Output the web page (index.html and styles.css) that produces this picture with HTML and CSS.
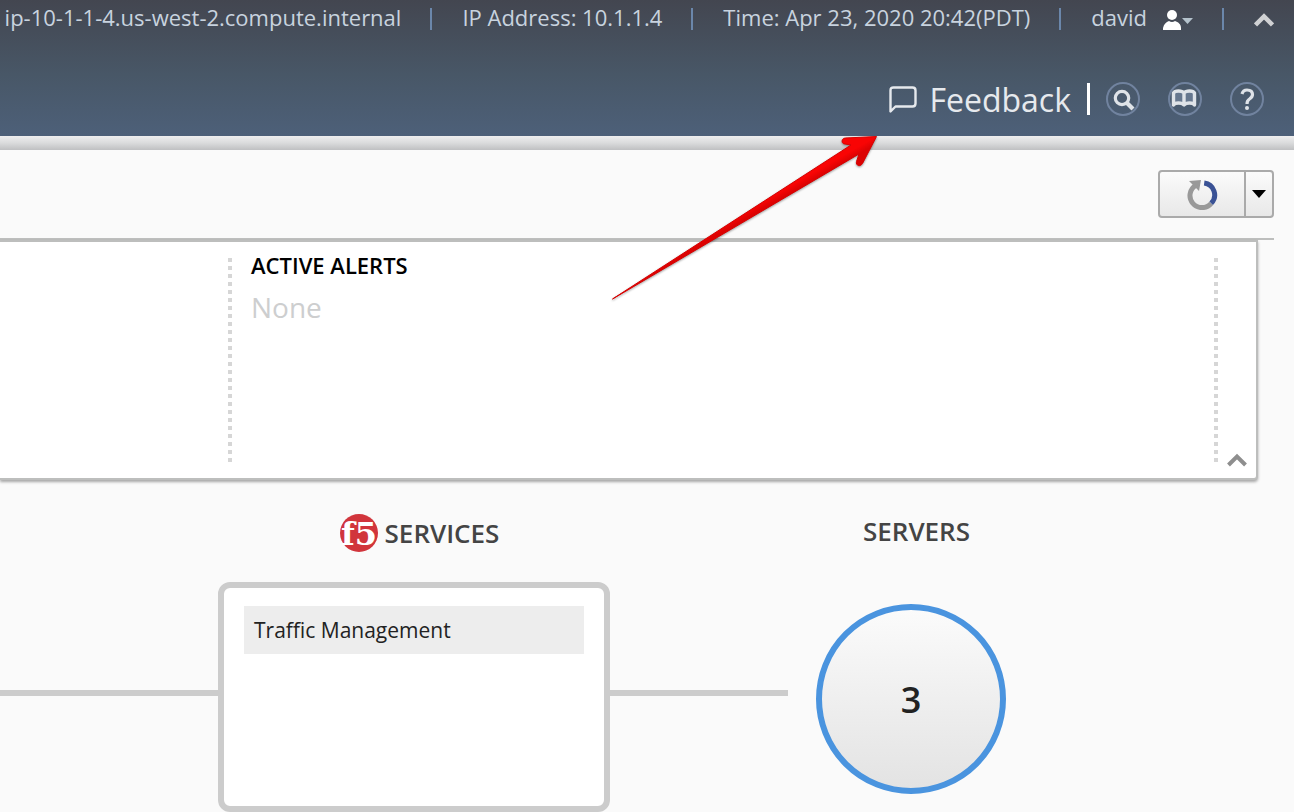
FILE: index.html
```html
<!DOCTYPE html>
<html lang="en">
<head>
<meta charset="utf-8">
<title>Dashboard</title>
<link rel="stylesheet" href="styles.css">
</head>
<body>
<header class="header">
  <ul class="status">
    <li class="status-item">ip-10-1-1-4.us-west-2.compute.internal</li>
    <li class="status-item">IP Address: 10.1.1.4</li>
    <li class="status-item">Time: Apr 23, 2020 20:42(PDT)</li>
    <li class="status-item">
      <button class="plain user" type="button">david
        <svg class="user-icon" width="30" height="22" viewBox="0 0 30 22" aria-hidden="true"><circle cx="9" cy="7" r="5" fill="#fff"/><path d="M0 22v-2c1-4 3-6 6-7q3 2 6 0c3 1 6 3 6 7v2z" fill="#fff"/><path d="M19 10h11l-5.500 6z" fill="#b4c2cc"/></svg>
      </button>
    </li>
    <li class="status-item">
      <button class="plain" type="button" aria-label="Collapse header"><svg width="20" height="22" viewBox="0 0 20 22"><path d="M1.500 17 10 8.500 18.500 17" fill="none" stroke="#d0d1d3" stroke-width="4.500"/></svg></button>
    </li>
  </ul>
  <nav class="tools" aria-label="Tools">
    <a class="feedback" href="#"><svg width="28" height="28" viewBox="0 0 28 28" aria-hidden="true"><path d="M1.500 26.500v-21q0-3 3-3h19q3 0 3 3v13q0 3-3 3h-17z" fill="none" stroke="#e6e9ed" stroke-width="2.400" stroke-linejoin="round"/></svg><span class="feedback-label">Feedback</span></a>
    <span class="divider"></span>
    <a href="#" aria-label="Search"><svg width="34" height="34" viewBox="0 0 34 34"><circle cx="17" cy="17" r="16" fill="none" stroke="#71839f" stroke-width="2"/><circle cx="16" cy="16" r="6.700" fill="none" stroke="#dfe3e8" stroke-width="3.200"/><path d="m21 21 6 6" stroke="#dfe3e8" stroke-width="4.200"/></svg></a>
    <a href="#" aria-label="Documentation"><svg width="34" height="34" viewBox="0 0 34 34"><circle cx="17" cy="17" r="16" fill="none" stroke="#71839f" stroke-width="2"/><path d="M5.500 23V11q1-2 5-2 4 0 5.500 2 1.500-2 5.500-2 4 0 5 2v12q-1-2-5-2-4 0-5.500 2-1.500-2-5.500-2-4 0-5 2zM16 10v13" fill="#66778e" stroke="#dfe3e8" stroke-width="3.400" stroke-linejoin="round"/></svg></a>
    <a href="#" aria-label="Help"><svg width="34" height="34" viewBox="0 0 34 34"><circle cx="17" cy="17" r="16" fill="none" stroke="#71839f" stroke-width="2"/><path d="M12 12q1-4 5-4 5.500 0 5.500 4.500 0 2.500-3 4.500-2.500 1.500-2.500 5" fill="none" stroke="#dfe3e8" stroke-width="3.200"/><circle cx="17" cy="26" r="2" fill="#dfe3e8"/></svg></a>
  </nav>
  <svg class="arrow" width="270" height="168" viewBox="0 0 270 168" aria-hidden="true">
    <defs><linearGradient id="red" gradientUnits="userSpaceOnUse" x1="130" y1="76" x2="138" y2="90"><stop offset="0.300" stop-color="#f90404"/><stop offset="0.700" stop-color="#dc0202"/></linearGradient></defs>
    <path d="M4.500 165 243 11l-6-1c-4 0-4-6 .5-6L268.500 2.500l-14 27c-2.500 4-7 2-6-2l2.500-7.500z" fill="url(#red)" stroke="#d80000" stroke-width="1" stroke-linejoin="round"/>
  </svg>
</header>
<div class="strip"></div>
<main class="main">
  <div class="toolbar">
    <div class="split">
      <button class="split-main" type="button" aria-label="Refresh"><svg width="32" height="32" viewBox="0 0 32 32"><path d="M10.200 7.100A12 12 0 1 0 25.200 25.300" fill="none" stroke="#999" stroke-width="5"/><path d="M18.200 5A12 12 0 0 1 25.200 25.300" fill="none" stroke="#3a5295" stroke-width="5"/><path d="M3 3l12-1-2 11z" fill="#999"/></svg></button>
      <button class="split-more" type="button" aria-label="Refresh options"><svg width="14" height="8" viewBox="0 0 14 8"><path d="M0 0h14L7 8z"/></svg></button>
    </div>
  </div>
  <section class="panel">
    <div class="panel-side"></div>
    <div class="alerts">
      <h2 class="alerts-title">ACTIVE ALERTS</h2>
      <p class="alerts-none">None</p>
    </div>
    <div class="panel-end">
      <button class="plain" type="button" aria-label="Collapse panel"><svg width="20" height="14" viewBox="0 0 20 14"><path d="M1.500 12 10 3.500 18.500 12" fill="none" stroke="#8e8e8e" stroke-width="4"/></svg></button>
    </div>
  </section>
  <section class="map">
    <div class="line line-start"></div>
    <div class="group group-services">
      <h2 class="group-title"><svg class="logo" width="38" height="38" viewBox="0 0 38 38" role="img" aria-label="f5"><circle cx="19" cy="19" r="19" fill="#d1353c"/><text class="logo-text" x="19" y="31" text-anchor="middle">f5</text></svg>SERVICES</h2>
      <div class="card"><a class="service" href="#">Traffic Management</a></div>
    </div>
    <div class="line line-end"></div>
    <div class="group group-servers">
      <h2 class="group-title">SERVERS</h2>
      <a class="count" href="#">3</a>
    </div>
  </section>
</main>
</body>
</html>
```
FILE: styles.css
```css
* { box-sizing: border-box; }

body {
  margin: 0;
  background: #fafafa;
  color: #222;
  font: 22px/30px "Open Sans", "Noto Sans", sans-serif;
  overflow-x: hidden;
}

h2, p, ul { margin: 0; padding: 0; }
a { color: inherit; text-decoration: none; }
svg { display: block; flex: none; }

.plain {
  display: flex;
  align-items: flex-start;
  padding: 0;
  border: 0;
  background: none;
  color: inherit;
  font: inherit;
}

.header {
  position: relative;
  display: flex;
  flex-direction: column;
  gap: 52px;
  padding: 8px 20px 20px 0;
  background: linear-gradient(#434650, #485767 55%, #4d6079);
  color: #c8d3df;
}

.status {
  display: flex;
  justify-content: flex-end;
  list-style: none;
  line-height: 18px;
  white-space: nowrap;
}

.status-item {
  display: flex;
  align-items: flex-start;
  height: 22px;
}

.status-item + .status-item {
  margin-left: 29px;
  padding-left: 30px;
  border-left: 2px solid #6b87ab;
}

.user { gap: 16px; }

.tools {
  display: flex;
  align-items: center;
  justify-content: flex-end;
  gap: 28px;
  height: 34px;
  padding-right: 10px;
}

.feedback {
  display: flex;
  align-items: center;
  gap: 12px;
  color: #e6e9ed;
  font-size: 32px;
  line-height: 36px;
}

.feedback-label { padding-top: 2px; }

.divider {
  width: 3px;
  height: 32px;
  margin: 0 -12px;
  background: #fff;
}

.arrow {
  position: absolute;
  top: 134px;
  left: calc(100% - 686px);
  filter: drop-shadow(0 1px 1px #0006);
}

.strip {
  height: 14px;
  background: linear-gradient(#eeeeef, #dadbdc 50%, #bfc0c2);
}

.toolbar {
  display: flex;
  justify-content: flex-end;
  margin-right: 20px;
  padding: 20px 0;
  border-bottom: 2px solid #bdbebd;
}

.split {
  display: flex;
  height: 48px;
  border: 2px solid #aaa;
  border-radius: 4px;
  background: linear-gradient(#fbfbfb, #e8e8e8);
}

.split-main, .split-more {
  display: flex;
  align-items: center;
  justify-content: center;
  padding: 0;
  border: 0;
  background: none;
}

.split-main { width: 84px; }
.split-more { width: 28px; border-left: 2px solid #aaa; }

.panel {
  display: flex;
  height: 240px;
  margin-right: 36px;
  padding: 16px 0;
  border: solid #bdbebd;
  border-width: 2px 2px 2px 0;
  border-radius: 0 0 4px 0;
  background: #fff;
  box-shadow: 0 2px 3px #0005;
}

.panel-side { flex: 0 0 228px; }

.alerts, .panel-end {
  background: repeating-linear-gradient(#d6d6d6 0 4px, transparent 4px 8px) left / 4px 100% no-repeat;
}

.alerts { flex: 1; padding-left: 23px; }
.alerts-title { color: #000; font-size: 22px; font-weight: 600; line-height: 14px; }
.alerts-none { margin-top: 17px; color: #cdcecf; font-size: 28px; line-height: 36px; }

.panel-end {
  display: flex;
  align-items: flex-end;
  justify-content: flex-end;
  width: 42px;
  padding-right: 9px;
}

.panel-end .plain { margin-bottom: -5px; }

.map {
  display: flex;
  align-items: flex-start;
  padding: 32px 288px 0 0;
}

.line { height: 6px; margin-top: 178px; background: #ccc; }
.line-start { flex: 1; }
.line-end { flex: 0 0 178px; }

.group { display: flex; flex-direction: column; }
.group-services { flex: 0 0 392px; }
.group-servers { align-items: center; flex: 0 0 190px; margin-left: 28px; }

.group-title {
  display: flex;
  align-items: center;
  justify-content: center;
  gap: 7px;
  height: 42px;
  padding-left: 11px;
  color: #444;
  font-size: 26px;
  font-weight: 600;
}

.group-servers .group-title { height: 38px; }

.logo { overflow: visible; }
.logo-text { fill: #fff; font: bold 32px "DejaVu Serif", serif; }

.card {
  height: 230px;
  margin-top: 28px;
  padding: 18px 20px;
  border: 6px solid #ccc;
  border-radius: 12px;
  background: #fff;
}

.service {
  display: block;
  padding: 9px 10px;
  background: #ededed;
  font-size: 21px;
}

.count {
  width: 190px;
  height: 190px;
  margin-top: 54px;
  border: 6px solid #4a94df;
  border-radius: 50%;
  background: linear-gradient(#fbfbfb, #e3e3e3);
  font-size: 36px;
  font-weight: 600;
  line-height: 180px;
  text-align: center;
}
```
